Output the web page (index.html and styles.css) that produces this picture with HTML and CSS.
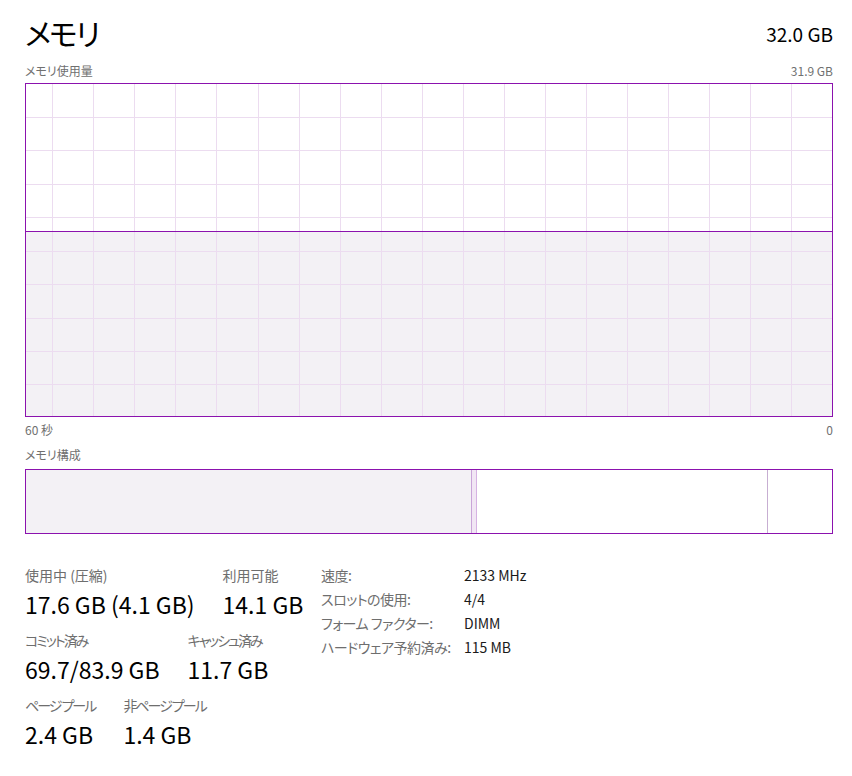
FILE: index.html
```html
<!DOCTYPE html>
<html lang="ja">
<head>
<meta charset="UTF-8">
<title>メモリ</title>
<link rel="stylesheet" href="styles.css">
</head>
<body>
<div class="panel">
    <div class="header">
        <h1 class="title">メモリ</h1>
        <div class="total">32.0 GB</div>
    </div>

    <div class="caption-row">
        <span>メモリ使用量</span>
        <span>31.9 GB</span>
    </div>
    <div class="chart">
        <svg width="806" height="332" viewBox="0 0 806 332">
            <rect x="0" y="147" width="806" height="185" fill="#f3f1f5"/>
            <g stroke="#ecdcf0" stroke-width="1">
                <line x1="0" y1="33.5" x2="806" y2="33.5"/>
                <line x1="0" y1="66.5" x2="806" y2="66.5"/>
                <line x1="0" y1="100.5" x2="806" y2="100.5"/>
                <line x1="0" y1="133.5" x2="806" y2="133.5"/>
                <line x1="0" y1="167.5" x2="806" y2="167.5"/>
                <line x1="0" y1="200.5" x2="806" y2="200.5"/>
                <line x1="0" y1="234.5" x2="806" y2="234.5"/>
                <line x1="0" y1="267.5" x2="806" y2="267.5"/>
                <line x1="0" y1="300.5" x2="806" y2="300.5"/>
                <line x1="26.5" y1="0" x2="26.5" y2="332"/>
                <line x1="67.5" y1="0" x2="67.5" y2="332"/>
                <line x1="108.5" y1="0" x2="108.5" y2="332"/>
                <line x1="149.5" y1="0" x2="149.5" y2="332"/>
                <line x1="190.5" y1="0" x2="190.5" y2="332"/>
                <line x1="232.5" y1="0" x2="232.5" y2="332"/>
                <line x1="273.5" y1="0" x2="273.5" y2="332"/>
                <line x1="314.5" y1="0" x2="314.5" y2="332"/>
                <line x1="355.5" y1="0" x2="355.5" y2="332"/>
                <line x1="396.5" y1="0" x2="396.5" y2="332"/>
                <line x1="437.5" y1="0" x2="437.5" y2="332"/>
                <line x1="478.5" y1="0" x2="478.5" y2="332"/>
                <line x1="519.5" y1="0" x2="519.5" y2="332"/>
                <line x1="560.5" y1="0" x2="560.5" y2="332"/>
                <line x1="601.5" y1="0" x2="601.5" y2="332"/>
                <line x1="642.5" y1="0" x2="642.5" y2="332"/>
                <line x1="683.5" y1="0" x2="683.5" y2="332"/>
                <line x1="724.5" y1="0" x2="724.5" y2="332"/>
                <line x1="765.5" y1="0" x2="765.5" y2="332"/>
            </g>
            <line x1="0" y1="147.5" x2="806" y2="147.5" stroke="#8b12ae" stroke-width="1"/>
        </svg>
    </div>
    <div class="axis-row">
        <span>60 秒</span>
        <span>0</span>
    </div>

    <div class="caption-row composition-caption">
        <span>メモリ構成</span>
    </div>
    <div class="composition">
        <div class="seg seg-used"></div>
        <div class="seg seg-modified"></div>
        <div class="seg seg-standby"></div>
        <div class="seg seg-free"></div>
    </div>

    <div class="stats">
        <div class="stats-left">
            <div class="stat-row">
                <div class="stat">
                    <div class="stat-label">使用中 (圧縮)</div>
                    <div class="stat-value">17.6 GB (4.1 GB)</div>
                </div>
                <div class="stat">
                    <div class="stat-label">利用可能</div>
                    <div class="stat-value">14.1 GB</div>
                </div>
            </div>
            <div class="stat-row">
                <div class="stat">
                    <div class="stat-label kana">コミット済み</div>
                    <div class="stat-value">69.7/83.9 GB</div>
                </div>
                <div class="stat">
                    <div class="stat-label kana">キャッシュ済み</div>
                    <div class="stat-value">11.7 GB</div>
                </div>
            </div>
            <div class="stat-row">
                <div class="stat">
                    <div class="stat-label kana">ページ プール</div>
                    <div class="stat-value">2.4 GB</div>
                </div>
                <div class="stat">
                    <div class="stat-label kana">非ページ プール</div>
                    <div class="stat-value">1.4 GB</div>
                </div>
            </div>
        </div>
        <div class="details">
            <div class="detail-label">速度:</div>
            <div class="detail-value">2133 MHz</div>
            <div class="detail-label">スロットの使用:</div>
            <div class="detail-value">4/4</div>
            <div class="detail-label">フォーム ファクター:</div>
            <div class="detail-value">DIMM</div>
            <div class="detail-label">ハードウェア予約済み:</div>
            <div class="detail-value">115 MB</div>
        </div>
    </div>
</div>
</body>
</html>
```

FILE: styles.css
```css
body {
    margin: 0;
    padding: 0;
    background-color: #ffffff;
    color: #000000;
    font-family: "Noto Sans CJK JP", "Noto Sans", sans-serif;
    font-feature-settings: "palt";
}

.panel {
    padding: 12px 19px 0 25px;
}

.header {
    display: flex;
    justify-content: space-between;
    align-items: center;
    height: 40px;
}

.title {
    margin: 0;
    font-size: 30px;
    font-weight: normal;
    line-height: 40px;
    letter-spacing: -2px;
}

.total {
    font-size: 19px;
    line-height: 24px;
    margin-top: 4px;
}

.caption-row {
    display: flex;
    justify-content: space-between;
    margin-top: 10px;
    font-size: 12px;
    line-height: 18px;
    color: #707070;
}

.chart {
    margin-top: 3px;
    width: 806px;
    height: 332px;
    border: 1px solid #8b12ae;
}

.chart svg {
    display: block;
}

.axis-row {
    display: flex;
    justify-content: space-between;
    margin-top: 4px;
    font-size: 12px;
    line-height: 18px;
    color: #707070;
}

.composition-caption {
    margin-top: 7px;
}

.composition {
    display: flex;
    margin-top: 5px;
    width: 806px;
    height: 63px;
    border: 1px solid #8b12ae;
}

.seg {
    height: 100%;
    box-sizing: border-box;
}

.seg-used {
    width: 446px;
    background-color: #f3f1f5;
    border-right: 1px solid #c9a4d8;
}

.seg-modified {
    width: 5px;
    background-color: #f1e6f4;
    border-right: 1px solid #d6b2e2;
}

.seg-standby {
    width: 291px;
    border-right: 1px solid #c7aed2;
}

.seg-free {
    flex: 1;
}

.stats {
    display: flex;
    margin-top: 32px;
}

.stats-left {
    width: 296px;
}

.stat-row {
    display: flex;
    gap: 28px;
    margin-bottom: 12px;
}

.stat-label {
    font-size: 14px;
    line-height: 18px;
    color: #6e6e6e;
}

/* カナの多いラベルは詰める */
.stat-label.kana {
    letter-spacing: -2px;
}

.stat-value {
    margin-top: 5px;
    font-size: 23px;
    line-height: 30px;
}

.details {
    display: grid;
    grid-template-columns: 143px auto;
    grid-auto-rows: 24px;
    align-content: start;
    font-size: 14px;
    line-height: 18px;
}

.detail-label {
    color: #6e6e6e;
    letter-spacing: -0.5px;
}

.detail-value {
    color: #1a1a1a;
}
```
